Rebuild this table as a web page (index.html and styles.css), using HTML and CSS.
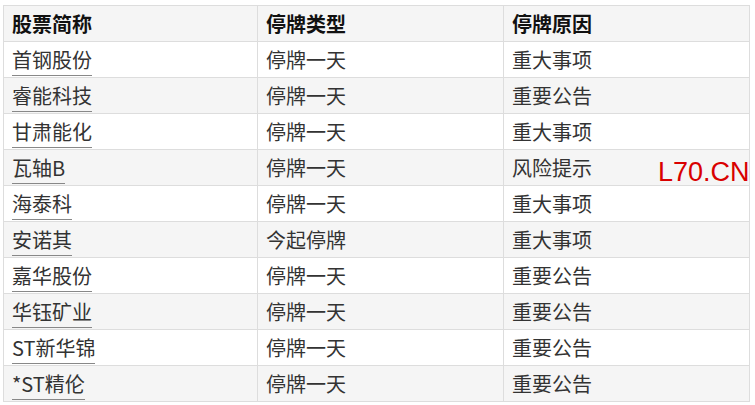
FILE: index.html
```html
<!DOCTYPE html>
<html lang="zh-CN">
<head>
<meta charset="utf-8">
<title>停牌一览</title>
<link rel="stylesheet" href="styles.css">
</head>
<body>
<div class="wrap">
  <table class="tbl">
    <colgroup>
      <col class="c1"><col class="c2"><col class="c3">
    </colgroup>
    <thead>
      <tr><th>股票简称</th><th>停牌类型</th><th>停牌原因</th></tr>
    </thead>
    <tbody>
      <tr><td><a href="#">首钢股份</a></td><td>停牌一天</td><td>重大事项</td></tr>
      <tr><td><a href="#">睿能科技</a></td><td>停牌一天</td><td>重要公告</td></tr>
      <tr><td><a href="#">甘肃能化</a></td><td>停牌一天</td><td>重大事项</td></tr>
      <tr><td><a href="#">瓦轴B</a></td><td>停牌一天</td><td>风险提示</td></tr>
      <tr><td><a href="#">海泰科</a></td><td>停牌一天</td><td>重大事项</td></tr>
      <tr><td><a href="#">安诺其</a></td><td>今起停牌</td><td>重大事项</td></tr>
      <tr><td><a href="#">嘉华股份</a></td><td>停牌一天</td><td>重要公告</td></tr>
      <tr><td><a href="#">华钰矿业</a></td><td>停牌一天</td><td>重要公告</td></tr>
      <tr><td><a href="#">ST新华锦</a></td><td>停牌一天</td><td>重要公告</td></tr>
      <tr><td><a href="#">*ST精伦</a></td><td>停牌一天</td><td>重要公告</td></tr>
    </tbody>
  </table>
  <div class="mark">L70.CN</div>
</div>
</body>
</html>
```
FILE: styles.css
```css
html, body {
  margin: 0;
  padding: 0;
  background: #fff;
}
.wrap {
  position: relative;
  padding: 5px 0 0 3px;
}
.tbl {
  border-collapse: collapse;
  width: 746px;
  table-layout: fixed;
  font-family: "Noto Sans CJK SC", "Noto Sans", sans-serif;
  font-size: 20px;
  color: #333;
}
.c1 { width: 254px; }
.c2 { width: 246px; }
.c3 { width: 246px; }
.tbl th, .tbl td {
  border: 1px solid #ddd;
  height: 36px;
  padding: 1px 8px 0;
  text-align: left;
  vertical-align: middle;
  line-height: 28px;
  box-sizing: border-box;
}
.tbl th {
  background: #f5f5f5;
  font-weight: bold;
  color: #111;
}
.tbl tbody tr:nth-child(even) td {
  background: #f5f5f5;
}
.tbl a {
  color: #333;
  text-decoration: none;
  border-bottom: 1px solid #888;
  padding-bottom: 1px;
}
.mark {
  position: absolute;
  left: 658px;
  top: 157px;
  font-family: "Liberation Sans", Arial, sans-serif;
  font-size: 27px;
  color: #d90000;
  line-height: 30px;
}
```
